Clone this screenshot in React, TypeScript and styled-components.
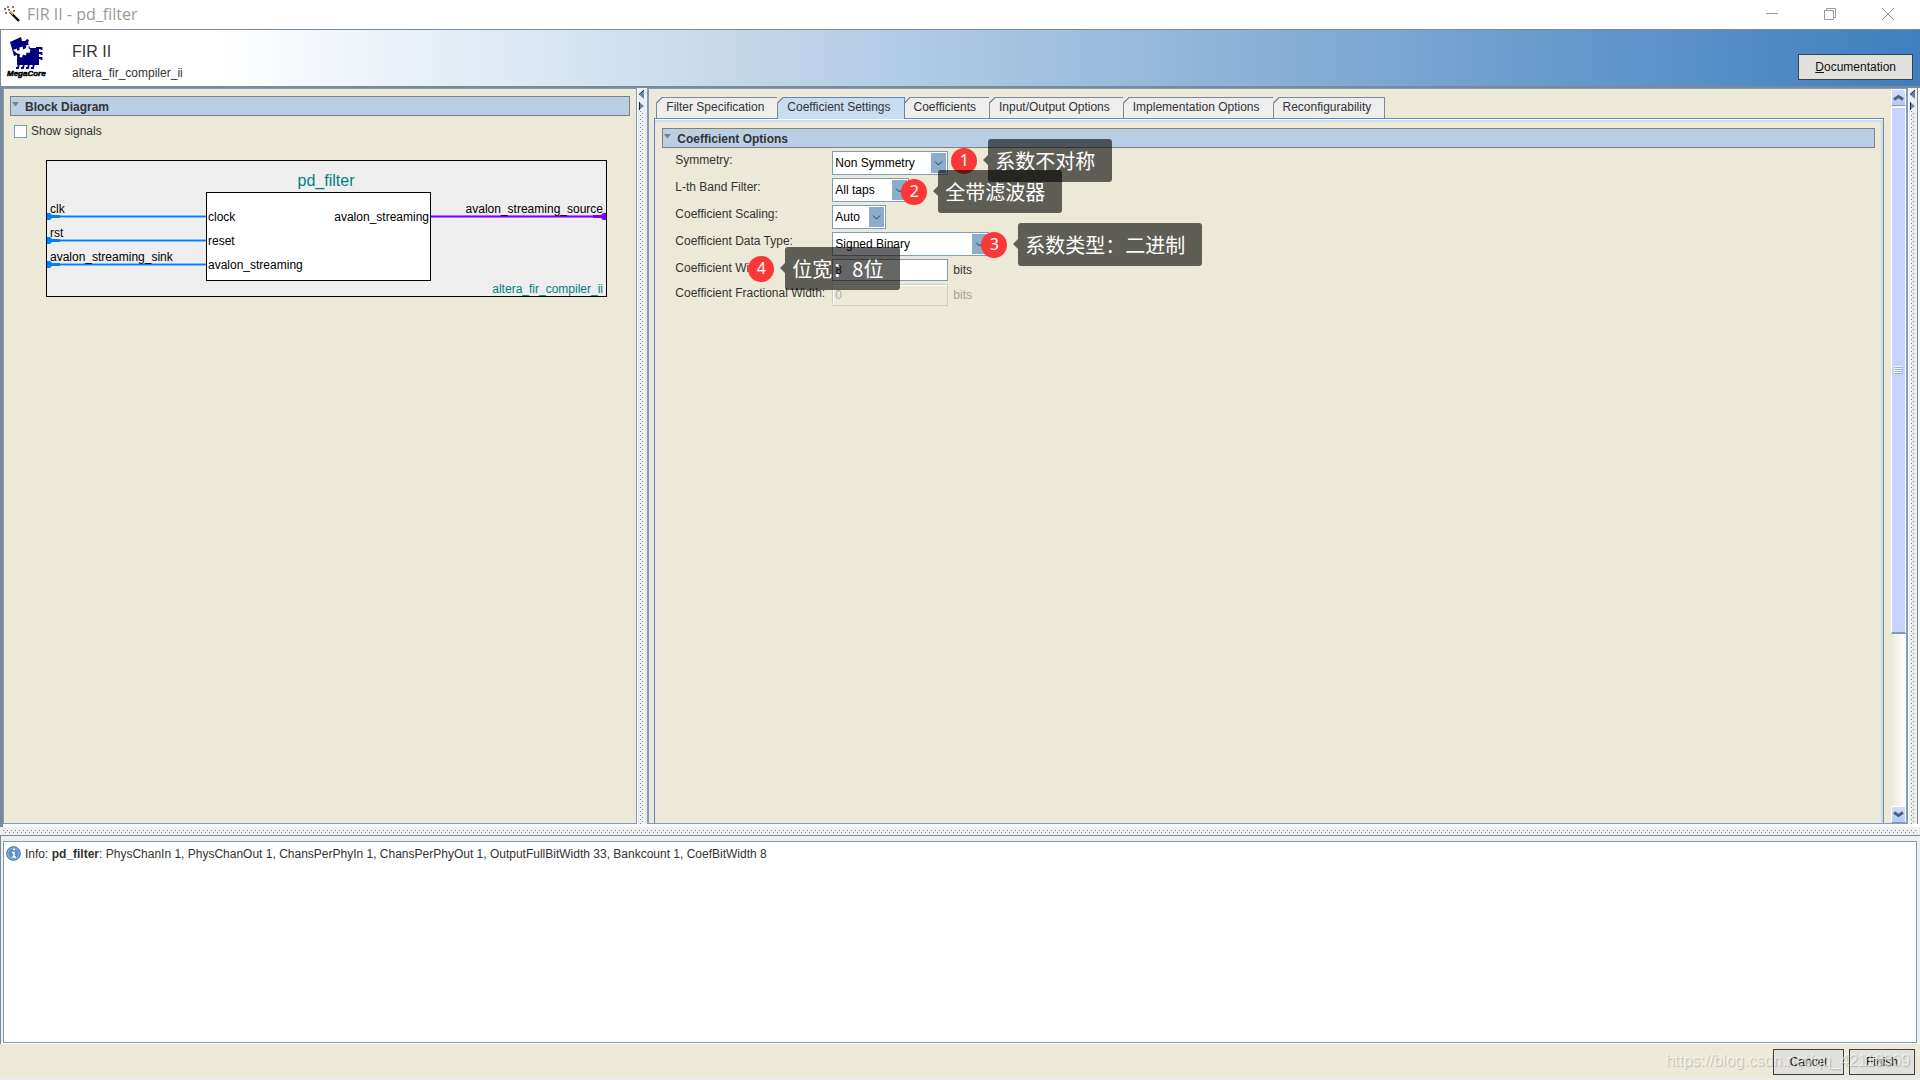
import React, { useState } from 'react';
import styled, { createGlobalStyle, css } from 'styled-components';

const c = {
  face: '#ece9d8',
  light: '#eeeeee',
  steel: '#7a8a99',
  line: '#7f9db9',
  bar: '#b8cfe5',
  tab: '#c8ddf2',
  accent: '#6382bf',
  text: '#333333',
};

const GlobalStyle = createGlobalStyle`
  *, *::before, *::after { box-sizing: border-box; }
  body {
    margin: 0;
    background: ${c.face};
    color: ${c.text};
    font: 12px/16px "Liberation Sans", Arial, sans-serif;
  }
  button, input, select { font: inherit; color: inherit; margin: 0; }
`;

const dots = css`
  background-color: ${c.light};
  background-image:
    conic-gradient(at 1px 1px, transparent 75%, #6f8698 0),
    conic-gradient(at 1px 1px, transparent 75%, #6f8698 0);
  background-size: 4px 4px;
  background-position: 0 0, 2px 2px;
`;

const Window = styled.div`
  display: flex;
  flex-direction: column;
  min-height: 100vh;
`;

const TitleBar = styled.header`
  display: flex;
  align-items: center;
  height: 29px;
  padding: 0 25px 2px 4px;
  background: #fff;
`;

const WindowTitle = styled.h1`
  flex: 1;
  margin: 0 0 0 7px;
  font: 400 16px/24px "Open Sans", "Noto Sans", sans-serif;
  color: #999;
`;

const WindowControls = styled.div`
  display: flex;
  gap: 44px;
`;

const WindowButton = styled.button`
  display: block;
  width: 14px;
  height: 14px;
  padding: 0;
  border: 0;
  background: none;
`;

const Banner = styled.section`
  display: flex;
  align-items: flex-end;
  height: 59px;
  padding: 0 7px 6px 7px;
  border-top: 1px solid ${c.steel};
  border-bottom: 2px solid ${c.steel};
  border-left: 1px solid ${c.steel};
  background: linear-gradient(90deg, #fff 11%, #3f7fbf 100%);
`;

const BannerText = styled.div`
  flex: 1;
  align-self: flex-start;
  margin: 13px 0 0 28px;
  p { margin: 0; }
`;

const BannerTitle = styled.h2`
  margin: 0 0 4px;
  font-size: 16px;
  line-height: 18px;
  font-weight: 400;
`;

const PushButton = styled.button`
  height: 26px;
  padding: 0 16px;
  border: 1px solid #404040;
  background: #e0e1dc;
  color: #111;
  white-space: nowrap;
`;

const Workspace = styled.main`
  flex: 1;
  display: flex;
  padding: 0 2px 3px 3px;
  background: linear-gradient(90deg, ${c.steel} 3px, #fff 3px);
`;

const Pane = styled.section`
  display: flex;
  border: 1px solid ${c.line};
  background: ${c.face};
`;

const LeftPane = styled(Pane)`
  flex: 0 0 calc(33.333% - 4px);
  flex-direction: column;
  padding: 7px 6px 6px;
`;

const RightPane = styled(Pane)`
  flex: 1;
  min-width: 0;
  border-left: 2px solid ${c.line};
  border-right: 2px solid ${c.line};
`;

const VerticalDivider = styled.div<{ $edge?: boolean }>`
  display: flex;
  flex-direction: column;
  flex: 0 0 9px;
  margin-left: 1px;
  padding: 0 2px 0 1px;
  background: ${c.light};
  border-right: ${(p) => (p.$edge ? `1px solid ${c.steel}` : '0')};
  svg { display: block; background: ${c.light}; }
  &::after { content: ""; flex: 1; width: 4px; margin-left: 1px; ${dots} }
`;

const HorizontalDivider = styled.div`
  height: 9px;
  padding: 3px 3px 0;
  background: ${c.light};
  border-bottom: 1px solid ${c.steel};
  &::after { content: ""; display: block; height: 4px; ${dots} }
`;

const SectionBar = styled.button`
  display: flex;
  align-items: center;
  width: 100%;
  height: 20px;
  padding: 2px 0 0 1px;
  border: 1px solid #808080;
  background: ${c.bar};
  font-weight: 700;
  text-align: left;
  svg { flex: none; align-self: flex-start; margin: 3px 6px 0 0; }
`;

const CheckRow = styled.label`
  display: flex;
  align-items: center;
  gap: 4px;
  margin: 7px 0 0 4px;
`;

const CheckBox = styled.input`
  appearance: none;
  width: 13px;
  height: 13px;
  margin: 0;
  border: 1px solid ${c.line};
  background: #fff;
  &:checked { background: ${c.accent}; }
`;

const Diagram = styled.svg`
  width: 562px;
  max-width: 100%;
  margin: 21px 0 0 36px;
  flex: none;
`;

const TabArea = styled.div`
  flex: 1;
  min-width: 0;
  display: flex;
  flex-direction: column;
  padding: 8px 7px 0 5px;
`;

const TabList = styled.div`
  display: flex;
  padding-left: 2px;
`;

const Tab = styled.button<{ $active: boolean }>`
  position: relative;
  height: ${(p) => (p.$active ? 22 : 21)}px;
  margin-bottom: ${(p) => (p.$active ? -1 : 0)}px;
  padding: 0 13px ${(p) => (p.$active ? 3 : 2)}px 9px;
  border: solid ${(p) => (p.$active ? c.accent : c.steel)};
  border-width: 1px 1px 0 0;
  background: ${(p) => (p.$active ? c.tab : c.light)};
  white-space: nowrap;
  z-index: ${(p) => (p.$active ? 1 : 0)};
  &:first-child { border-left-width: 1px; }
  &::before {
    content: "";
    position: absolute;
    top: -1px;
    left: -1px;
    width: 7px;
    height: 7px;
    background: linear-gradient(135deg, ${c.face} 42%, ${c.steel} 43% 54%, transparent 55%);
  }
`;

const TabPanel = styled.div`
  position: relative;
  flex: 1;
  padding: 9px 8px 0 7px;
  border: solid ${c.accent};
  border-width: 1px 1px 0 1px;
  border-right-color: ${c.steel};
  box-shadow: inset 0 1px #fff, inset -2px 0 ${c.tab}, inset 0 3px ${c.tab};
`;

const Form = styled.div`
  display: flex;
  flex-direction: column;
  gap: 3px;
  padding: 3px 0 0 13px;
`;

const Row = styled.div`
  display: flex;
  align-items: flex-start;
`;

const FieldLabel = styled.label`
  width: 157px;
  padding-top: 1px;
  white-space: nowrap;
`;

const SelectBox = styled.div<{ $width: number }>`
  position: relative;
  width: ${(p) => p.$width}px;
  height: 24px;
  svg {
    position: absolute;
    top: 2px;
    right: 2px;
    pointer-events: none;
  }
`;

const Select = styled.select`
  appearance: none;
  width: 100%;
  height: 100%;
  padding: 0 18px 1px 2px;
  border: 1px solid ${c.line};
  border-radius: 0;
  background: #fff;
  color: #000;
`;

const TextField = styled.input`
  width: 116px;
  height: 22px;
  padding: 0 2px;
  border: 1px solid ${c.line};
  background: #fff;
  &:disabled {
    border-color: #cccccc;
    background: ${c.face};
    color: #b0ada0;
    box-shadow: inset 1px 1px #fff;
  }
`;

const Unit = styled.span<{ $dim?: boolean }>`
  margin: 3px 0 0 5px;
  color: ${(p) => (p.$dim ? '#a5a39a' : c.text)};
`;

const Annotation = styled.div<{ $x: number; $y: number }>`
  position: absolute;
  left: ${(p) => p.$x}px;
  top: ${(p) => p.$y}px;
  display: flex;
  align-items: center;
  z-index: 2;
`;

const Badge = styled.span`
  width: 26px;
  height: 26px;
  border-radius: 50%;
  background: #fb3838;
  color: #fff;
  font: 16px/24px "Noto Sans", sans-serif;
  text-align: center;
`;

const Bubble = styled.span`
  position: relative;
  margin-left: 11px;
  padding: 7px 17px 6px 7px;
  border-radius: 3px;
  background: rgba(0, 0, 0, 0.6);
  color: #fff;
  font: 20px/30px "Noto Sans CJK SC", sans-serif;
  white-space: nowrap;
  &::before {
    content: "";
    position: absolute;
    right: 100%;
    top: 16px;
    border: solid transparent;
    border-width: 5px 5px 5px 0;
    border-right-color: rgba(0, 0, 0, 0.6);
  }
`;

const ScrollBar = styled.div`
  display: flex;
  flex-direction: column;
  width: 15px;
  background: linear-gradient(90deg, ${c.face}, #fff);
`;

const ScrollButton = styled.button`
  display: grid;
  place-items: center;
  width: 15px;
  height: 17px;
  padding: 0;
  border: 1px solid #fff;
  border-bottom-color: #8b95b5;
  background: linear-gradient(#d3defc, #b6c8f0);
`;

const ScrollTrack = styled.div`
  flex: 1;
  padding-top: 1px;
`;

const Thumb = styled.div`
  display: grid;
  place-items: center;
  height: 75.4%;
  border: 1px solid #fff;
  border-bottom: 2px solid #8b95b5;
  background: #c6d3fd;
`;

const Messages = styled.section`
  display: flex;
  height: 208px;
  padding: 5px 3px 1px 2px;
  border-left: 1px solid ${c.steel};
  background: ${c.light};
  box-shadow: inset 0 -1px #fff;
`;

const MessageList = styled.ul`
  flex: 1;
  margin: 0;
  padding: 4px 2px;
  border: 1px solid ${c.line};
  background: #fff;
  list-style: none;
`;

const Message = styled.li`
  display: flex;
  gap: 4px;
  svg { flex: none; }
`;

const Footer = styled.footer`
  position: relative;
  display: flex;
  justify-content: flex-end;
  gap: 5px;
  height: 36px;
  padding: 5px 5px 0;
  border-bottom: 2px solid #ebebeb;
`;

const Watermark = styled.span`
  position: absolute;
  right: 10px;
  top: 6px;
  font-size: 16px;
  line-height: 22px;
  color: rgba(255, 255, 255, 0.6);
  text-shadow: 1px 1px 1px rgba(0, 0, 0, 0.2);
  pointer-events: none;
`;

const WandIcon = () => (
  <svg width="16" height="16" viewBox="0 0 16 16" aria-hidden="true">
    <path d="M6 6l9 9" stroke="#000" strokeWidth="2.4" />
    <path d="M6.3 6l2.6 2.6" stroke="#e9dc4a" strokeWidth="1.2" />
    <path d="M4 0v2M3 1h2M1 2v2M0 3h2M9 0v2M8 1h2M1 7h2M2 6v2M5 3v2M4 4h2M10 4v2M9 5h2" stroke="#8b3a3a" strokeWidth="1" />
  </svg>
);

const MegaCoreLogo = () => (
  <svg width="36" height="44" viewBox="0 0 36 44" overflow="visible" role="img" aria-label="MegaCore">
    <path fill="#000080" d="M2 6l11-5 1 4 3 0 2-2 2 1-1 3 2 5h9v17H9V19l-3 1z" />
    <path fill="#fff" d="M5 14l4-1.500 0 2 2.500 0 0-3 3-1 .5 3 3-1.500.5-3 2.500 0-.5 3 2 2-1 3-3-.5-.5 3-3-1-1 3-2.500-.5.5-3-3-.5z" />
    <path d="M28 12h5.500v2M28 17h5.500v2M28 22h5.500v2M11 28l-1 4H8M16 28l-1 4h-2M21 28l-1 4h-2M26 28l-1 4h-2" fill="none" stroke="#000080" strokeWidth="1.800" />
    <text x="-1" y="40" fontFamily="Liberation Sans, Arial, sans-serif" fontSize="8" fontWeight="700" fontStyle="italic" fill="#000" stroke="#000" strokeWidth=".5">MegaCore</text>
  </svg>
);

const TwistIcon = () => (
  <svg width="7" height="5" viewBox="0 0 7 5" aria-hidden="true">
    <path d="M0 0h7L3.500 4.500z" fill="#808080" />
  </svg>
);

const SplitArrows = () => (
  <svg width="5" height="23" viewBox="0 0 5 23" aria-hidden="true">
    <path d="M5 2v9L0 6.500z" fill="#6382bf" />
    <path d="M5 2L0 6.500" stroke="#223" />
    <path d="M0 14v8l5-4z" fill="#6382bf" />
    <path d="M.5 14v8" stroke="#223" />
  </svg>
);

const SelectArrow = () => (
  <svg width="15" height="20" viewBox="0 0 15 20" aria-hidden="true">
    <path d="M0 0h15v20H0z" fill="#8caccb" />
    <path d="M4 8.500l3.500 3.500L11 8.500" fill="none" stroke="#333c48" />
  </svg>
);

const ScrollArrow = ({ up }: { up?: boolean }) => (
  <svg width="11" height="7" viewBox="0 0 11 7" aria-hidden="true">
    <path d={up ? 'M1 5.500l4.500-3 4.500 3' : 'M1 1.500l4.500 3 4.500-3'} fill="none" stroke="#4d6185" strokeWidth="3" />
  </svg>
);

const InfoIcon = () => (
  <svg width="15" height="15" viewBox="0 0 15 15" aria-hidden="true">
    <circle cx="7.500" cy="7.500" r="6.800" fill="#5b91c9" stroke="#33669c" />
    <circle cx="7.500" cy="7.500" r="5.600" fill="none" stroke="#a9cbea" strokeWidth=".8" />
    <path d="M6 6.500h2v4.500M6 11h4M7 3.500h2" fill="none" stroke="#fff" strokeWidth="1.500" />
  </svg>
);

const tabs = [
  'Filter Specification',
  'Coefficient Settings',
  'Coefficients',
  'Input/Output Options',
  'Implementation Options',
  'Reconfigurability',
];

const selects = [
  { id: 'symmetry', label: 'Symmetry:', value: 'Non Symmetry', width: 116 },
  { id: 'band', label: 'L-th Band Filter:', value: 'All taps', width: 77 },
  { id: 'scaling', label: 'Coefficient Scaling:', value: 'Auto', width: 54 },
  { id: 'datatype', label: 'Coefficient Data Type:', value: 'Signed Binary', width: 157 },
];

const annotations = [
  { n: 1, text: '系数不对称', x: 296, y: 20 },
  { n: 2, text: '全带滤波器', x: 246, y: 51 },
  { n: 3, text: '系数类型：二进制', x: 326, y: 104 },
  { n: 4, text: '位宽：8位', x: 93, y: 128 },
];

const inputs = [
  { y: 57, outer: 'clk', inner: 'clock' },
  { y: 81, outer: 'rst', inner: 'reset' },
  { y: 105, outer: 'avalon_streaming_sink', inner: 'avalon_streaming' },
];

const BlockDiagram = () => (
  <Diagram viewBox="0 0 562 138" fontFamily="Liberation Sans, Arial, sans-serif" fontSize="12" fill="#000">
    <rect x=".5" y=".5" width="560" height="136" fill="#eee" stroke="#000" />
    <rect x="160.500" y="32.500" width="224" height="88" fill="#fff" stroke="#000" />
    <text x="280" y="26" fontSize="16" fill="#008080" textAnchor="middle">pd_filter</text>
    {inputs.map((p) => (
      <g key={p.outer}>
        <path d={`M1 ${p.y - 0.5}H160`} stroke="#80bfff" strokeWidth="3" />
        <path d={`M1 ${p.y - 0.5}H160`} stroke="#0080ff" strokeWidth="1" />
        <path d={`M1 ${p.y - 4}h3l2 2h8v3H6l-2 2H1z`} fill="#0080ff" />
        <text x="4" y={p.y - 4}>{p.outer}</text>
        <text x="162" y={p.y + 4}>{p.inner}</text>
      </g>
    ))}
    <path d="M385 56.500H560" stroke="#b366ff" strokeWidth="3" />
    <path d="M385 56.500H560" stroke="#8000ff" strokeWidth="1" />
    <path d="M560 53h-3l-2 2h-8v3h8l2 2h3z" fill="#8000ff" />
    <text x="383" y="61" textAnchor="end">avalon_streaming</text>
    <text x="557" y="53" textAnchor="end">avalon_streaming_source</text>
    <text x="557" y="133" fill="#008080" textAnchor="end">altera_fir_compiler_ii</text>
  </Diagram>
);

export default function App() {
  const [active, setActive] = useState(1);
  return (
    <>
      <GlobalStyle />
      <Window>
        <TitleBar>
          <WandIcon />
          <WindowTitle>FIR II - pd_filter</WindowTitle>
          <WindowControls>
            <WindowButton aria-label="Minimize">
              <svg width="14" height="14" viewBox="0 0 14 14"><path d="M1 6.500h12" stroke="#999" /></svg>
            </WindowButton>
            <WindowButton aria-label="Restore">
              <svg width="14" height="14" viewBox="0 0 14 14"><path d="M1.500 3.500h9v9h-9zM3.500 3.500v-2h9v9h-2" fill="none" stroke="#999" /></svg>
            </WindowButton>
            <WindowButton aria-label="Close">
              <svg width="14" height="14" viewBox="0 0 14 14"><path d="M1 1l12 12M13 1L1 13" stroke="#999" /></svg>
            </WindowButton>
          </WindowControls>
        </TitleBar>

        <Banner>
          <MegaCoreLogo />
          <BannerText>
            <BannerTitle>FIR II</BannerTitle>
            <p>altera_fir_compiler_ii</p>
          </BannerText>
          <PushButton><u>D</u>ocumentation</PushButton>
        </Banner>

        <Workspace>
          <LeftPane>
            <SectionBar><TwistIcon />Block Diagram</SectionBar>
            <CheckRow><CheckBox type="checkbox" />Show signals</CheckRow>
            <BlockDiagram />
          </LeftPane>
          <VerticalDivider><SplitArrows /></VerticalDivider>
          <RightPane>
            <TabArea>
              <TabList role="tablist">
                {tabs.map((t, i) => (
                  <Tab key={t} role="tab" aria-selected={i === active} $active={i === active} onClick={() => setActive(i)}>{t}</Tab>
                ))}
              </TabList>
              <TabPanel role="tabpanel">
                <SectionBar><TwistIcon />Coefficient Options</SectionBar>
                <Form>
                  {selects.map((s) => (
                    <Row key={s.id}>
                      <FieldLabel htmlFor={s.id}>{s.label}</FieldLabel>
                      <SelectBox $width={s.width}>
                        <Select id={s.id}><option>{s.value}</option></Select>
                        <SelectArrow />
                      </SelectBox>
                    </Row>
                  ))}
                  <Row>
                    <FieldLabel htmlFor="width">Coefficient Width:</FieldLabel>
                    <TextField id="width" defaultValue="8" />
                    <Unit>bits</Unit>
                  </Row>
                  <Row>
                    <FieldLabel htmlFor="fraction">Coefficient Fractional Width:</FieldLabel>
                    <TextField id="fraction" defaultValue="0" disabled />
                    <Unit $dim>bits</Unit>
                  </Row>
                </Form>
                {annotations.map((a) => (
                  <Annotation key={a.n} $x={a.x} $y={a.y}>
                    <Badge>{a.n}</Badge>
                    <Bubble>{a.text}</Bubble>
                  </Annotation>
                ))}
              </TabPanel>
            </TabArea>
            <ScrollBar>
              <ScrollButton aria-label="Scroll up"><ScrollArrow up /></ScrollButton>
              <ScrollTrack>
                <Thumb>
                  <svg width="9" height="8" viewBox="0 0 9 8" aria-hidden="true">
                    <path d="M0 .5h8M0 2.500h8M0 4.500h8M0 6.500h8" stroke="#f2f5ff" />
                    <path d="M1 1.500h8M1 3.500h8M1 5.500h8M1 7.500h8" stroke="#9fb0e0" />
                  </svg>
                </Thumb>
              </ScrollTrack>
              <ScrollButton aria-label="Scroll down"><ScrollArrow /></ScrollButton>
            </ScrollBar>
          </RightPane>
          <VerticalDivider $edge><SplitArrows /></VerticalDivider>
        </Workspace>

        <HorizontalDivider />

        <Messages>
          <MessageList>
            <Message>
              <InfoIcon />
              <span>Info: <b>pd_filter</b>: PhysChanIn 1, PhysChanOut 1, ChansPerPhyIn 1, ChansPerPhyOut 1, OutputFullBitWidth 33, Bankcount 1, CoefBitWidth 8</span>
            </Message>
          </MessageList>
        </Messages>

        <Footer>
          <PushButton>Cancel</PushButton>
          <PushButton>Finish</PushButton>
          <Watermark>https://blog.csdn.net/qq_42118309</Watermark>
        </Footer>
      </Window>
    </>
  );
}
